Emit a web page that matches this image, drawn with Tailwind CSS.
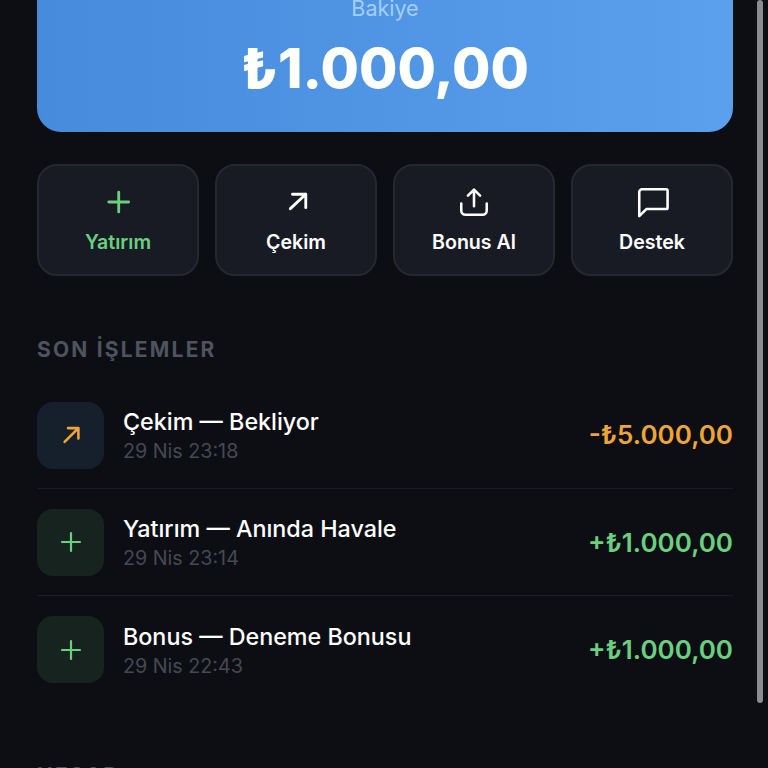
<!DOCTYPE html>
<html lang="tr">
<head>
  <meta charset="UTF-8">
  <meta name="viewport" content="width=device-width, initial-scale=1.0">
  <title>Cüzdan</title>
  <script src="https://cdn.jsdelivr.net/npm/@tailwindcss/browser@4"></script>
</head>
<body class="bg-[#0d0e14]">
<div class="relative h-[768px] overflow-hidden font-['Inter',sans-serif] text-white">

  <!-- Scrollbar -->
  <div class="absolute right-[5px] top-0 h-[703px] w-[6px] rounded-full bg-[#8b8c92]"></div>

  <main class="pl-[37px] pr-[35px]">
    <!-- Balance card -->
    <section class="-mt-[8px] flex h-[140px] flex-col items-center rounded-b-[24px] bg-gradient-to-r from-[#468bdc] to-[#5aa0ec]">
      <p class="text-[21.5px] leading-[32px] text-[#a5cdf6]">Bakiye</p>
      <p class="mt-[12px] text-[55.6px] font-extrabold leading-[64px]">₺1.000,00</p>
    </section>

    <!-- Actions -->
    <section class="mt-[32px] grid grid-cols-4 gap-[16px]">
      <button class="flex h-[112px] flex-col items-center rounded-[20px] border-2 border-[#262831] bg-[#191b24] pt-[19px]">
        <svg class="h-[34px] w-[34px]" viewBox="0 0 24 24" fill="none" stroke="#68d07e" stroke-width="2" stroke-linecap="round"><path d="M12.5 5v14M5.5 12h14"/></svg>
        <span class="mt-[10px] text-[19.6px] font-semibold leading-[26px] text-[#68d07e]">Yatırım</span>
      </button>
      <button class="flex h-[112px] flex-col items-center rounded-[20px] border-2 border-[#262831] bg-[#191b24] pt-[19px]">
        <svg class="h-[34px] w-[34px]" viewBox="0 0 24 24" fill="none" stroke="#fff" stroke-width="2" stroke-linecap="round" stroke-linejoin="round"><path d="M8 16.7L18.9 6.5M9.5 6.5h9.4V16"/></svg>
        <span class="mt-[10px] text-[19.6px] font-semibold leading-[26px]">Çekim</span>
      </button>
      <button class="flex h-[112px] flex-col items-center rounded-[20px] border-2 border-[#262831] bg-[#191b24] pt-[19px]">
        <svg class="h-[34px] w-[34px]" viewBox="0 0 24 24" fill="none" stroke="#fff" stroke-width="1.8" stroke-linecap="round" stroke-linejoin="round"><path d="M3 13v5a3 3 0 003 3h12a3 3 0 003-3v-5M12 15V3.5M7.7 7.5L12 3.2l4.3 4.3"/></svg>
        <span class="mt-[10px] text-[19.6px] font-semibold leading-[26px]">Bonus Al</span>
      </button>
      <button class="flex h-[112px] flex-col items-center rounded-[20px] border-2 border-[#262831] bg-[#191b24] pt-[19px]">
        <svg class="h-[34px] w-[34px]" viewBox="0 0 24 24" fill="none" stroke="#fff" stroke-width="1.8" stroke-linecap="round" stroke-linejoin="round"><path d="M3 5a2 2 0 012-2h17a1 1 0 011 1v12a1 1 0 01-1 1H8l-5 5z"/></svg>
        <span class="mt-[10px] text-[19.6px] font-semibold leading-[26px]">Destek</span>
      </button>
    </section>

    <!-- Transactions -->
    <h2 class="mt-[61px] text-[21px] font-bold leading-[26px] tracking-[2.2px] text-[#4e535f]">SON İŞLEMLER</h2>
    <ul class="mt-[19px]">
      <li class="flex h-[107px] items-center gap-[19px] border-b border-[#1a1b23]">
        <div class="flex h-[67px] w-[67px] items-center justify-center rounded-[16px] bg-[#16202c]">
          <svg class="h-[24px] w-[24px]" viewBox="0 0 24 24" fill="none" stroke="#eea436" stroke-width="2.6" stroke-linecap="round" stroke-linejoin="round"><path d="M5.6 18.9L19.4 5.1M9 5.1h10.4v10.4"/></svg>
        </div>
        <div class="flex-1 pt-[2px]">
          <p class="mb-[2px] text-[23.3px] font-medium leading-[28px]">Çekim — Bekliyor</p>
          <p class="text-[19.7px] leading-[26px] text-[#464853]">29 Nis 23:18</p>
        </div>
        <p class="pb-[1px] text-[26px] font-semibold text-[#eea436]">-₺5.000,00</p>
      </li>
      <li class="flex h-[107px] items-center gap-[19px] border-b border-[#1a1b23]">
        <div class="flex h-[67px] w-[67px] items-center justify-center rounded-[16px] bg-[#17231e]">
          <svg class="h-[24px] w-[24px]" viewBox="0 0 24 24" fill="none" stroke="#68d07e" stroke-width="2.2" stroke-linecap="round"><path d="M12 3v18M3 12h18"/></svg>
        </div>
        <div class="flex-1 pt-[2px]">
          <p class="mb-[2px] text-[23.3px] font-medium leading-[28px]">Yatırım — Anında Havale</p>
          <p class="text-[19.7px] leading-[26px] text-[#464853]">29 Nis 23:14</p>
        </div>
        <p class="text-[26px] font-semibold text-[#68d07e]">+₺1.000,00</p>
      </li>
      <li class="flex h-[107px] items-center gap-[19px]">
        <div class="flex h-[67px] w-[67px] items-center justify-center rounded-[16px] bg-[#17231e]">
          <svg class="h-[24px] w-[24px]" viewBox="0 0 24 24" fill="none" stroke="#68d07e" stroke-width="2.2" stroke-linecap="round"><path d="M12 3v18M3 12h18"/></svg>
        </div>
        <div class="flex-1 pt-[2px]">
          <p class="mb-[2px] text-[23.3px] font-medium leading-[28px]">Bonus — Deneme Bonusu</p>
          <p class="text-[19.7px] leading-[26px] text-[#464853]">29 Nis 22:43</p>
        </div>
        <p class="text-[26px] font-semibold text-[#68d07e]">+₺1.000,00</p>
      </li>
    </ul>

    <h2 class="mt-[60px] text-[21px] font-bold leading-[26px] tracking-[2.2px] text-[#4e535f]">HESAP</h2>
  </main>
</div>
</body>
</html>
